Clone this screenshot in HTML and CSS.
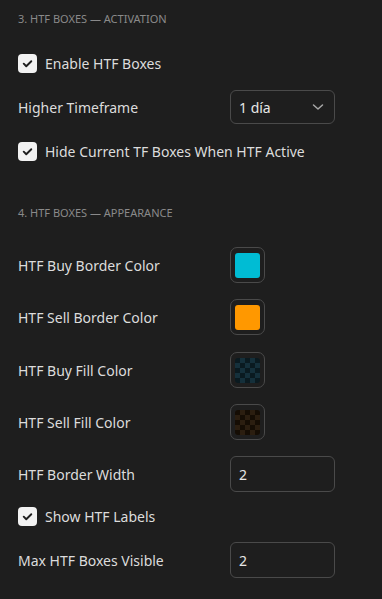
FILE: index.html
```html
<!DOCTYPE html>
<html lang="en">
<head>
<meta charset="utf-8">
<title>HTF Boxes Settings</title>
<link rel="stylesheet" href="styles.css">
</head>
<body>
<div class="panel">
  <div class="section-title">3. HTF Boxes — Activation</div>

  <label class="row cb-row mt-10">
    <span class="checkbox"><svg viewBox="0 0 20 20" width="20" height="20"><path d="M6 10.2l2.7 2.7L14 7.6" fill="none" stroke="#1e1e1e" stroke-width="2" stroke-linecap="round" stroke-linejoin="round"/></svg></span>
    <span class="cb-label">Enable HTF Boxes</span>
  </label>

  <div class="row field-row mt-10">
    <span class="label">Higher Timeframe</span>
    <div class="select">
      <span>1 día</span>
      <svg class="chev" viewBox="0 0 12 8" width="12" height="8"><path d="M1.5 2l4.5 4 4.5-4" fill="none" stroke="#a8a8a8" stroke-width="1.5" stroke-linecap="round" stroke-linejoin="round"/></svg>
    </div>
  </div>

  <label class="row cb-row mt-10">
    <span class="checkbox"><svg viewBox="0 0 20 20" width="20" height="20"><path d="M6 10.2l2.7 2.7L14 7.6" fill="none" stroke="#1e1e1e" stroke-width="2" stroke-linecap="round" stroke-linejoin="round"/></svg></span>
    <span class="cb-label">Hide Current TF Boxes When HTF Active</span>
  </label>

  <div class="section-title mt-26">4. HTF Boxes — Appearance</div>

  <div class="row field-row color-row mt-17">
    <span class="label">HTF Buy Border Color</span>
    <div class="swatch-btn"><span class="swatch cyan"></span></div>
  </div>
  <div class="row field-row color-row mt-16">
    <span class="label">HTF Sell Border Color</span>
    <div class="swatch-btn"><span class="swatch orange"></span></div>
  </div>
  <div class="row field-row color-row mt-17">
    <span class="label">HTF Buy Fill Color</span>
    <div class="swatch-btn"><span class="swatch checker-blue"></span></div>
  </div>
  <div class="row field-row color-row mt-16">
    <span class="label">HTF Sell Fill Color</span>
    <div class="swatch-btn"><span class="swatch checker-orange"></span></div>
  </div>

  <div class="row field-row mt-17">
    <span class="label">HTF Border Width</span>
    <div class="input">2</div>
  </div>

  <label class="row cb-row mt-8">
    <span class="checkbox"><svg viewBox="0 0 20 20" width="20" height="20"><path d="M6 10.2l2.7 2.7L14 7.6" fill="none" stroke="#1e1e1e" stroke-width="2" stroke-linecap="round" stroke-linejoin="round"/></svg></span>
    <span class="cb-label">Show HTF Labels</span>
  </label>

  <div class="row field-row mt-10">
    <span class="label">Max HTF Boxes Visible</span>
    <div class="input">2</div>
  </div>
</div>
</body>
</html>
```

FILE: styles.css
```css
html, body {
  margin: 0;
  padding: 0;
  background: #1e1e1e;
}
body {
  font-family: "Noto Sans", "DejaVu Sans", sans-serif;
  color: #dcdcdc;
  font-size: 14px;
  width: 382px;
  height: 599px;
  overflow: hidden;
}
.panel {
  display: flex;
  flex-direction: column;
  padding: 0 18px;
}
.section-title {
  height: 36px;
  display: flex;
  align-items: center;
  text-transform: uppercase;
  font-size: 11px;
  color: #8a8a8a;
  letter-spacing: 0;
}
.row {
  display: flex;
  align-items: center;
}
.cb-row {
  height: 34px;
  gap: 8px;
}
.field-row {
  height: 34px;
}
.color-row {
  height: 36px;
}
.label {
  width: 212px;
  flex: none;
}
.checkbox {
  width: 19px;
  height: 19px;
  border-radius: 4px;
  background: #f2f2f2;
  display: flex;
  align-items: center;
  justify-content: center;
  flex: none;
}
.checkbox svg {
  width: 19px;
  height: 19px;
}
.select, .input {
  width: 105px;
  height: 34px;
  box-sizing: border-box;
  border: 1px solid #4a4a4a;
  border-radius: 6px;
  display: flex;
  align-items: center;
  padding: 0 8px;
  color: #e6e6e6;
}
.input {
  height: 36px;
}
.select {
  justify-content: space-between;
  padding-right: 10px;
}
.chev {
  width: 12px;
  height: 8px;
}
.swatch-btn {
  width: 35px;
  height: 36px;
  box-sizing: border-box;
  border: 1px solid #4a4a4a;
  border-radius: 7px;
  display: flex;
  align-items: center;
  justify-content: center;
}
.swatch {
  width: 25px;
  height: 25px;
  border-radius: 3px;
  display: block;
}
.cyan { background: #00bcd4; }
.orange { background: #ff9800; }
.checker-blue {
  background-color: #0a1a20;
  background-image:
    linear-gradient(45deg, #15303b 25%, transparent 25%, transparent 75%, #15303b 75%),
    linear-gradient(45deg, #15303b 25%, transparent 25%, transparent 75%, #15303b 75%);
  background-size: 10px 10px;
  background-position: 0 0, 5px 5px;
}
.checker-orange {
  background-color: #150d04;
  background-image:
    linear-gradient(45deg, #2b1e10 25%, transparent 25%, transparent 75%, #2b1e10 75%),
    linear-gradient(45deg, #2b1e10 25%, transparent 25%, transparent 75%, #2b1e10 75%);
  background-size: 10px 10px;
  background-position: 0 0, 5px 5px;
}
.mt-8 { margin-top: 8px; }
.mt-10 { margin-top: 10px; }
.mt-16 { margin-top: 16px; }
.mt-17 { margin-top: 17px; }
.mt-26 { margin-top: 26px; }
```
